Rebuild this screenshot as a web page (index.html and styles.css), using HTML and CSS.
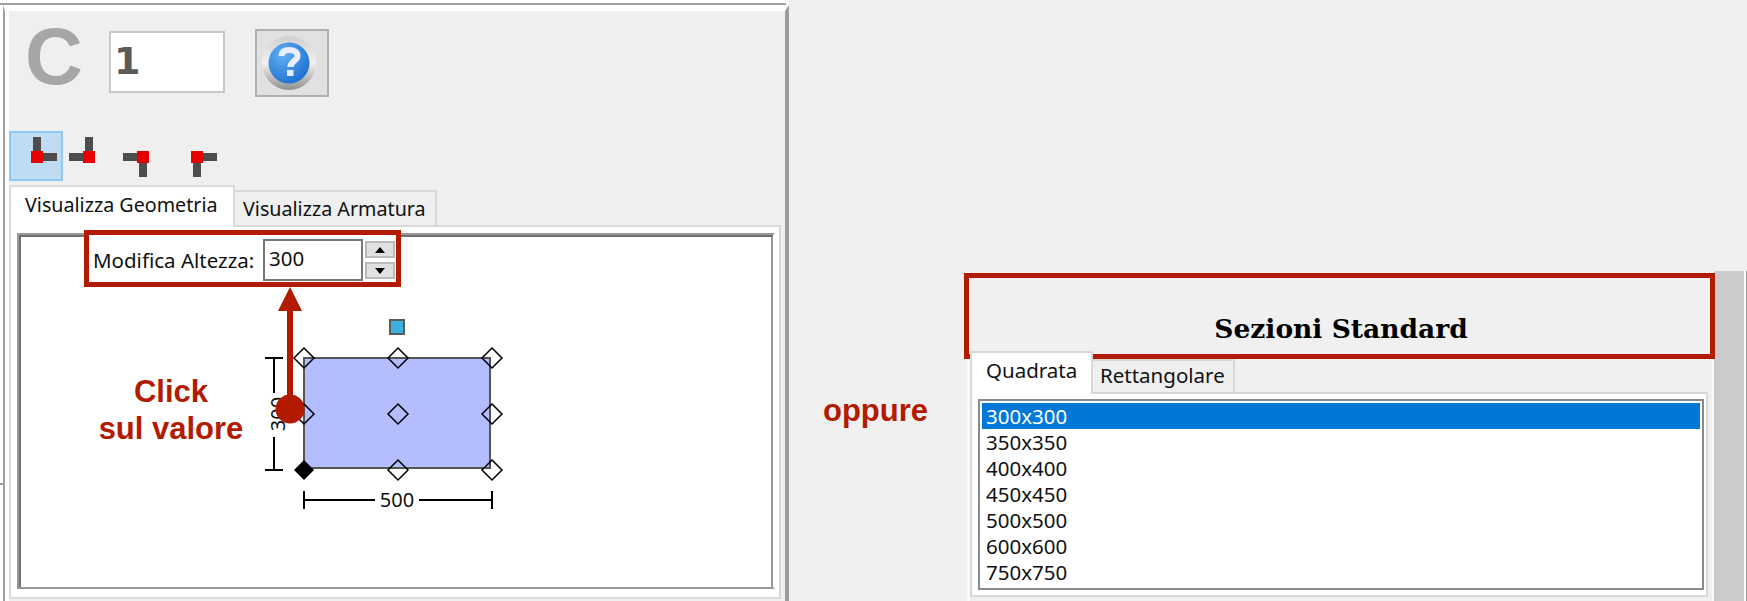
FILE: index.html
```html
<!DOCTYPE html>
<html lang="en">

<head>
    <meta charset="UTF-8">
    <title>Sezioni</title>
    <link rel="stylesheet" href="styles.css">
</head>

<body>
    <div id="page">
        <!-- left window -->
        <div class="left-win">
            <div class="top-rule"></div>
            <div class="left-body">
                <div class="left-inner">
                    <div class="head-row">
                        <span class="big-c">C</span>
                        <div class="name-box">1</div>
                        <div class="help-btn">
                            <svg width="58" height="58" viewBox="0 0 58 58">
                                <defs>
                                    <radialGradient id="ball" cx="35%" cy="30%" r="80%">
                                        <stop offset="0" stop-color="#62b0f4"/>
                                        <stop offset="1" stop-color="#1a6ccf"/>
                                    </radialGradient>
                                    <linearGradient id="ring" x1="0" y1="0" x2="0" y2="1">
                                        <stop offset="0" stop-color="#cfcfcf"/>
                                        <stop offset="0.5" stop-color="#f2f2f2"/>
                                        <stop offset="1" stop-color="#8f8f8f"/>
                                    </linearGradient>
                                </defs>
                                <circle cx="29" cy="29" r="27" fill="url(#ring)"/>
                                <circle cx="29" cy="29" r="20.500" fill="url(#ball)"/>
                                <path d="M21.500 22c0-4.500 3.500-6 8-6s8 2 8 6c0 5-7 5-7 11" fill="none" stroke="#e8eefc" stroke-width="6"/>
                                <rect x="27" y="36" width="6.500" height="6" fill="#e8eefc"/>
                            </svg>
                        </div>
                    </div>

                    <div class="tool-row">
                        <div class="tool-btn selected">
                            <svg width="50" height="46" viewBox="0 0 50 46"><path d="M22 4h8v16h-8zM32 20h14v8H32z" fill="#4d4d4d"/><rect x="20" y="18" width="12" height="12" fill="#e80000"/></svg>
                        </div>
                        <div class="tool-btn">
                            <svg width="50" height="46" viewBox="0 0 50 46"><path d="M22 4h8v16h-8zM6 20h14v8H6z" fill="#4d4d4d"/><rect x="20" y="18" width="12" height="12" fill="#e80000"/></svg>
                        </div>
                        <div class="tool-btn">
                            <svg width="50" height="46" viewBox="0 0 50 46"><path d="M6 20h14v8H6zM22 30h8v14h-8z" fill="#4d4d4d"/><rect x="20" y="18" width="12" height="12" fill="#e80000"/></svg>
                        </div>
                        <div class="tool-btn">
                            <svg width="50" height="46" viewBox="0 0 50 46"><path d="M32 20h14v8H32zM22 30h8v14h-8z" fill="#4d4d4d"/><rect x="20" y="18" width="12" height="12" fill="#e80000"/></svg>
                        </div>
                    </div>

                    <div class="tabs left-tabs">
                        <div class="tab active">Visualizza Geometria</div>
                        <div class="tab">Visualizza Armatura</div>
                    </div>
                    <div class="tab-pane left-pane">
                        <div class="canvas">
                            <svg class="drawing" width="754" height="352" viewBox="19 235 754 352">
                                <rect x="304" y="358" width="186" height="110" fill="#b3bdff" stroke="#555" stroke-width="2"/>
                                <rect x="390" y="320" width="14" height="14" fill="#3aafe0" stroke="#5a5a5a" stroke-width="2"/>
                                <g fill="none" stroke="#000" stroke-width="1.500">
                                    <path d="M304 348l10 10-10 10-10-10z"/>
                                    <path d="M398 348l10 10-10 10-10-10z"/>
                                    <path d="M492 348l10 10-10 10-10-10z"/>
                                    <path d="M304 404l10 10-10 10-10-10z"/>
                                    <path d="M398 404l10 10-10 10-10-10z"/>
                                    <path d="M492 404l10 10-10 10-10-10z"/>
                                    <path d="M398 460l10 10-10 10-10-10z"/>
                                    <path d="M492 460l10 10-10 10-10-10z"/>
                                </g>
                                <path d="M304 460l10 10-10 10-10-10z" fill="#000"/>
                                <g fill="none" stroke="#000" stroke-width="2">
                                    <path d="M265 358h18M265 470h18M274 358v35M274 437v33"/>
                                    <path d="M304 491v18M492 491v18M304 500h71M419 500h73"/>
                                </g>
                                <text class="dim-text" x="397" y="507" text-anchor="middle">500</text>
                                <text class="dim-text" transform="translate(285 414) rotate(-90)" text-anchor="middle">300</text>
                            </svg>
                        </div>
                    </div>
                </div>
            </div>
        </div>

        <!-- right window -->
        <div class="right-win">
            <div class="std-panel">
                <div class="std-title">Sezioni Standard</div>
                <div class="tabs right-tabs">
                    <div class="tab active">Quadrata</div>
                    <div class="tab">Rettangolare</div>
                </div>
                <div class="tab-pane right-pane">
                    <div class="listbox">
                        <div class="list-item selected">300x300</div>
                        <div class="list-item">350x350</div>
                        <div class="list-item">400x400</div>
                        <div class="list-item">450x450</div>
                        <div class="list-item">500x500</div>
                        <div class="list-item">600x600</div>
                        <div class="list-item">750x750</div>
                    </div>
                </div>
            </div>
            <div class="side-bar"></div>
            <div class="edge-line"></div>
        </div>

        <!-- annotations on top of the screenshots -->
        <div class="tick"></div>
        <div class="callout height-box">
            <span class="height-label">Modifica Altezza:</span>
            <div class="height-input">300</div>
            <div class="spin">
                <div class="spin-btn"><span class="arrow-up"></span></div>
                <div class="spin-btn"><span class="arrow-down"></span></div>
            </div>
        </div>
        <svg class="pointer" width="40" height="140" viewBox="0 0 40 140">
            <path d="M20 0l12 24H23v100h-6V24H8z" fill="#b21b00"/>
            <circle cx="20" cy="122" r="14.500" fill="#b21b00"/>
        </svg>
        <div class="note click-note">Click<br>sul valore</div>
        <div class="note or-note">oppure</div>
        <div class="callout title-box"></div>
    </div>
</body>

</html>
```

FILE: styles.css
```css
* {
  box-sizing: border-box;
}

body {
  margin: 0;
  font-family: "Noto Sans", sans-serif;
  font-size: 20.5px;
  color: #111;
  background-color: #f0f0f0;
}

#page {
  position: relative;
  width: 1747px;
  height: 601px;
  overflow: hidden;
  display: flex;
}

/* left window */
.left-win {
  width: 789px;
  height: 601px;
  background-color: #fff;
  flex: none;
}

.top-rule {
  width: 787px;
  height: 5px;
  border-bottom: 2px solid #a0a0a0;
  border-right: 2px solid #fff;
}

.left-body {
  height: 596px;
  margin-left: 3px;
  border-left: 2px solid #a0a0a0;
  border-right: 4px solid #9c9c9c;
  border-top: 6px solid #fff;
  padding-left: 4px;
  background-color: #fff;
}

.left-inner {
  height: 100%;
  background-color: #efefef;
}

.head-row {
  height: 120px;
  display: flex;
  align-items: flex-start;
  padding-left: 16px;
}

.big-c {
  font-family: "Liberation Sans", sans-serif;
  font-weight: bold;
  font-size: 80px;
  line-height: 88px;
  color: #a6a6a6;
  width: 84px;
  margin-top: 2px;
}

.name-box {
  width: 116px;
  height: 62px;
  margin-top: 20px;
  border: 2px solid #c8c8c8;
  background-color: #fff;
  font-family: "DejaVu Sans", sans-serif;
  font-weight: bold;
  font-size: 38px;
  line-height: 56px;
  color: #595959;
  padding-left: 3px;
}

.help-btn {
  width: 74px;
  height: 68px;
  margin-top: 18px;
  margin-left: 30px;
  border: 2px solid #b0b0b0;
  background-color: #e1e1e1;
  display: flex;
  align-items: center;
  justify-content: center;
  padding-right: 6px;
}

.tool-row {
  height: 54px;
  display: flex;
}

.tool-btn {
  width: 54px;
  height: 50px;
  border: 2px solid transparent;
}

.tool-btn svg {
  display: block;
}

.tool-btn:nth-child(2) {
  margin-left: -1px;
  width: 47px;
}

.tool-btn:nth-child(2) svg {
  margin-left: -1px;
}

.tool-btn:nth-child(3) {
  width: 68px;
}

.tool-btn:nth-child(3) svg {
  margin-left: 6px;
}

.tool-btn:nth-child(4) svg {
  margin-left: -8px;
}

.tool-btn.selected {
  background-color: #bfdcf2;
  border-color: #90c8f6;
}

.tabs {
  display: flex;
  align-items: flex-end;
  height: 40px;
}

.tab {
  height: 35px;
  padding: 0 8px;
  line-height: 34px;
  white-space: nowrap;
  background-color: #efefef;
  border: 2px solid #d9d9d9;
  border-bottom: none;
  border-left: none;
}

.tab.active {
  height: 42px;
  line-height: 36px;
  background-color: #fff;
  border-left: 2px solid #d9d9d9;
  position: relative;
  z-index: 1;
  margin-bottom: -2px;
}

.left-tabs .tab {
  font-size: 19.7px;
}

.left-tabs .tab.active {
  width: 226px;
  padding: 0 0 0 14px;
}

.left-tabs .tab:last-child {
  width: 202px;
}

.tab-pane {
  border: 2px solid #d9d9d9;
  background-color: #fff;
}

.left-pane {
  width: 772px;
  height: 374px;
  padding: 6px;
}

.canvas {
  width: 758px;
  height: 356px;
  border-style: solid;
  border-width: 2px;
  border-color: #999 #fff #999 #999;
  box-shadow: inset 2px 2px 0 #707070, inset -2px 0 0 #999;
  background-color: #fff;
}

.drawing {
  display: block;
}

.dim-text {
  font-family: "Noto Sans", sans-serif;
  font-size: 20px;
  fill: #111;
}

/* right window */
.right-win {
  flex: 1;
  display: flex;
  padding: 271px 0 0 178px;
}

.std-panel {
  width: 747px;
  flex: none;
  border-left: 3px solid #fafafa;
  border-right: 2px solid #fafafa;
  padding-bottom: 4px;
}

.std-title {
  height: 80px;
  padding-top: 38px;
  text-align: center;
  font-family: "DejaVu Serif", serif;
  font-weight: bold;
  font-size: 26.5px;
  line-height: 40px;
  color: #000;
  white-space: nowrap;
}

.right-tabs {
  height: 41px;
}

.right-tabs .tab {
  height: 33px;
  line-height: 29px;
  width: 142px;
  padding: 0 0 0 7px;
}

.right-tabs .tab.active {
  width: 123px;
  height: 43px;
  line-height: 34px;
  padding: 0 0 0 14px;
}

.right-pane {
  width: 738px;
  height: 205px;
  padding: 5px 2px 5px 6px;
}

.listbox {
  height: 191px;
  width: 726px;
  border: 2px solid #868a91;
  background-color: #fff;
  padding: 2px;
}

.list-item {
  height: 26px;
  line-height: 26px;
  padding-left: 4px;
}

.list-item.selected {
  background-color: #0078d7;
  color: #fff;
}

.side-bar {
  width: 32px;
  flex: none;
  background-color: #cbcbcb;
  border-right: 2px solid #fafafa;
}

.edge-line {
  flex: 1;
  background-color: #999;
}

/* annotations */
.tick {
  position: absolute;
  left: 0;
  top: 483px;
  width: 3px;
  height: 2px;
  background-color: #a0a0a0;
}

.callout {
  position: absolute;
  border: 5px solid #b21b00;
}

.height-box {
  left: 84px;
  top: 230px;
  width: 317px;
  height: 57px;
  background-color: #fff;
  display: flex;
  align-items: center;
  padding: 3px 0 0 4px;
}

.height-label {
  width: 170px;
  flex: none;
}

.height-input {
  width: 100px;
  height: 42px;
  border: 2px solid #777;
  line-height: 34px;
  padding-left: 4px;
}

.spin {
  margin-left: 2px;
  display: flex;
  flex-direction: column;
  gap: 4px;
}

.spin-btn {
  width: 30px;
  height: 17px;
  background-color: #e1e1e1;
  border: 2px solid #bbb;
  display: flex;
  align-items: center;
  justify-content: center;
}

.arrow-up {
  border-left: 5px solid transparent;
  border-right: 5px solid transparent;
  border-bottom: 6px solid #000;
}

.arrow-down {
  border-left: 5px solid transparent;
  border-right: 5px solid transparent;
  border-top: 6px solid #000;
}

.pointer {
  position: absolute;
  left: 270px;
  top: 287px;
}

.note {
  position: absolute;
  font-family: "Liberation Sans", sans-serif;
  font-weight: bold;
  font-size: 31px;
  line-height: 37px;
  color: #b21b00;
  text-align: center;
}

.click-note {
  left: 71px;
  top: 373px;
  width: 200px;
}

.or-note {
  left: 823px;
  top: 392px;
}

.title-box {
  left: 964px;
  top: 273px;
  width: 751px;
  height: 86px;
}
```
